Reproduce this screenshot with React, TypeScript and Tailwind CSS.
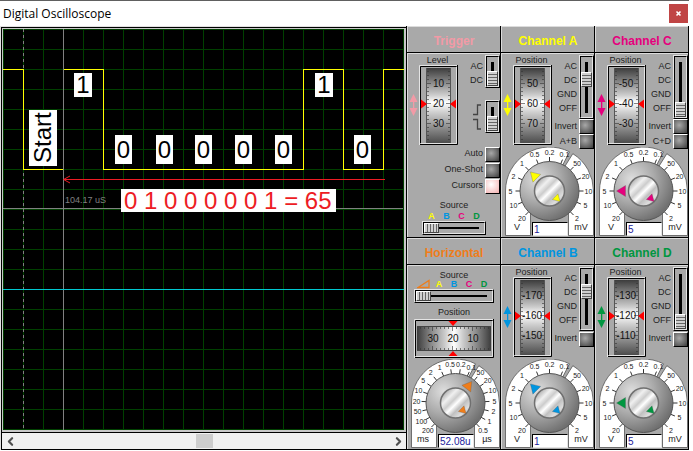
import React, { useState } from 'react';
import { ChevronLeft, ChevronRight } from 'lucide-react';

const SOURCES = [
  { name: 'A', color: 'text-[#ffff00]' },
  { name: 'B', color: 'text-[#0095e0]' },
  { name: 'C', color: 'text-[#e5007d]' },
  { name: 'D', color: 'text-[#009640]' },
];

const VOLT_MARKS = ['20', '10', '5', '2', '1', '0.5', '0.2', '0.1', '50', '20', '10', '5', '2'];
const TIME_MARKS = ['200', '100', '50', '20', '10', '5', '2', '1', '0.5', '0.2', '0.1', '50', '20', '10', '5', '2', '1', '0.5'];

const CX = 47.5;
const CY = 44;

const polar = (r: number, deg: number): [number, number] => {
  const a = (deg * Math.PI) / 180;
  return [CX + r * Math.cos(a), CY - r * Math.sin(a)];
};

const pointer = (tip: number, base: number, half: number, deg: number) => {
  const spread = (Math.atan2(half, base) * 180) / Math.PI;
  const r = Math.hypot(base, half);
  return [polar(tip, deg), polar(r, deg - spread), polar(r, deg + spread)]
    .map((p) => p.join(','))
    .join(' ');
};

// Shared gradients for the knobs and the thumb wheels
const Gradients: React.FC = () => (
  <svg className="absolute h-0 w-0" aria-hidden="true">
    <defs>
      <radialGradient id="knob" cx="30%" cy="30%" r="75%">
        <stop offset="0" stopColor="#dedede" />
        <stop offset="0.5" stopColor="#ababab" />
        <stop offset="1" stopColor="#707070" />
      </radialGradient>
      <linearGradient id="cap" x1="0" y1="0" x2="1" y2="1">
        <stop offset="0.1" stopColor="#a0a0a0" />
        <stop offset="0.3" stopColor="#f0f0f0" />
        <stop offset="0.42" stopColor="#cccccc" />
        <stop offset="0.52" stopColor="#ffffff" />
        <stop offset="0.64" stopColor="#c0c0c0" />
        <stop offset="0.78" stopColor="#dddddd" />
        <stop offset="0.95" stopColor="#a0a0a0" />
      </linearGradient>
      <linearGradient id="wheelV" x1="0" y1="0" x2="0" y2="1">
        <stop offset="0" stopColor="#3c3c3c" />
        <stop offset="0.2" stopColor="#8c8c8c" />
        <stop offset="0.36" stopColor="#cccccc" />
        <stop offset="0.46" stopColor="#ffffff" />
        <stop offset="0.6" stopColor="#cccccc" />
        <stop offset="0.8" stopColor="#8c8c8c" />
        <stop offset="1" stopColor="#4c4c4c" />
      </linearGradient>
      <linearGradient id="wheelH" x1="0" y1="0" x2="1" y2="0">
        <stop offset="0" stopColor="#3c3c3c" />
        <stop offset="0.2" stopColor="#8c8c8c" />
        <stop offset="0.38" stopColor="#cccccc" />
        <stop offset="0.5" stopColor="#ffffff" />
        <stop offset="0.62" stopColor="#cccccc" />
        <stop offset="0.8" stopColor="#8c8c8c" />
        <stop offset="1" stopColor="#3c3c3c" />
      </linearGradient>
    </defs>
  </svg>
);

const Bevel: React.FC<{ children: React.ReactNode }> = ({ children }) => (
  <div className="border border-b-black border-l-[#e4e4e4] border-r-black border-t-[#e4e4e4]">
    <div className="flex border border-b-[#e4e4e4] border-l-black border-r-[#e4e4e4] border-t-black">{children}</div>
  </div>
);

interface SwitchProps {
  label: string;
  max: number;
  initial: number;
}

const VerticalSwitch: React.FC<SwitchProps> = ({ label, max, initial }) => {
  const [value, setValue] = useState(initial);
  return (
    <Bevel>
      <input
        type="range"
        aria-label={label}
        min={0}
        max={max}
        value={value}
        onChange={(e) => setValue(Number(e.target.value))}
        className={`${max === 1 ? 'h-[29px]' : 'h-[60px]'} w-[11px] appearance-none bg-[linear-gradient(#000,#000)] bg-[length:3px_calc(100%-9px)] bg-center bg-no-repeat [writing-mode:vertical-lr] [&::-webkit-slider-thumb]:h-[15px] [&::-webkit-slider-thumb]:w-[11px] [&::-webkit-slider-thumb]:appearance-none [&::-webkit-slider-thumb]:border [&::-webkit-slider-thumb]:border-b-[#444] [&::-webkit-slider-thumb]:border-l-white [&::-webkit-slider-thumb]:border-r-[#444] [&::-webkit-slider-thumb]:border-t-white [&::-webkit-slider-thumb]:bg-[repeating-linear-gradient(#d0d0d0_0px,#d0d0d0_2px,#666_2px,#666_3px)]`}
      />
    </Bevel>
  );
};

const SourceSlider: React.FC<{ label: string; max: number; size: string }> = ({ label, max, size }) => {
  const [value, setValue] = useState(0);
  return (
    <div className={`mx-auto ${size}`}>
      <Bevel>
        <input
          type="range"
          aria-label={label}
          min={0}
          max={max}
          value={value}
          onChange={(e) => setValue(Number(e.target.value))}
          className="h-[10px] w-full appearance-none bg-[linear-gradient(#000,#000)] bg-[length:calc(100%-10px)_2px] bg-center bg-no-repeat [&::-webkit-slider-thumb]:h-[10px] [&::-webkit-slider-thumb]:w-[15px] [&::-webkit-slider-thumb]:appearance-none [&::-webkit-slider-thumb]:border [&::-webkit-slider-thumb]:border-b-[#444] [&::-webkit-slider-thumb]:border-l-white [&::-webkit-slider-thumb]:border-r-[#444] [&::-webkit-slider-thumb]:border-t-white [&::-webkit-slider-thumb]:bg-[repeating-linear-gradient(90deg,#d0d0d0_0px,#d0d0d0_2px,#666_2px,#666_3px)]"
        />
      </Bevel>
    </div>
  );
};

const PushButton: React.FC<{ label: string; lit?: boolean }> = ({ label, lit }) => (
  <label className="flex h-4 items-center justify-end gap-[2px] whitespace-nowrap">
    {label}
    <input
      type="checkbox"
      defaultChecked={lit}
      className="h-[15px] w-[15px] shrink-0 appearance-none border border-b-black border-l-white border-r-black border-t-white bg-[radial-gradient(circle_at_40%_40%,#a8a8a8,#3c3c3c)] checked:bg-[radial-gradient(circle_at_40%_35%,#fff,#f4b0b0)]"
    />
  </label>
);

const RangeArrow: React.FC<{ color: string }> = ({ color }) => (
  <svg width="9" height="24" viewBox="0 0 9 24" className={`shrink-0 ${color}`} fill="currentColor">
    <path d="M4.5 1 8.5 9H.5ZM4.5 23 .5 15h8ZM4 8h1.3v8H4Z" />
  </svg>
);

const VerticalWheel: React.FC<{ label: string; values: string[] }> = ({ label, values }) => (
  <svg width="39" height="80" viewBox="0 0 39 80" role="slider" aria-label={label} aria-valuenow={Number(values[1])}>
    <path d="M.5 80V.5H39" fill="none" stroke="#e4e4e4" />
    <path d="M1.5 78V1.5H37.5" fill="none" stroke="#000" />
    <path d="M2 78.5H37.5V2" fill="none" stroke="#e4e4e4" />
    <path d="M1 79.5H38.5V0" fill="none" stroke="#000" />
    <rect x="7" y="3" width="25" height="75" fill="url(#wheelV)" />
    <path d="M7.5 3V78M31.5 3V78" stroke="#555" />
    {Array.from({ length: 18 }, (_, i) => {
      const y = 6.5 + i * 4;
      const long = i === 3 || i === 8 || i === 13;
      return <path key={i} d={`M8 ${y}h${long ? 4 : 2}M31 ${y}h-${long ? 4 : 2}`} stroke="#333" strokeWidth="0.6" />;
    })}
    {values.map((v, i) => (
      <text key={v} x={v.length > 2 ? 19 : 19.5} y={22 + i * 20} textAnchor="middle" fontSize="10" fill="#111">
        {v}
      </text>
    ))}
    <path d="M2 34.5 8 39 2 43.5ZM37 34.5 31 39l6 4.5Z" fill="#f00" />
  </svg>
);

const HorizontalWheel: React.FC = () => (
  <svg width="80" height="39" viewBox="0 0 80 39" role="slider" aria-label="Horizontal position" aria-valuenow={20} className="mx-auto block">
    <path d="M.5 39V.5H80" fill="none" stroke="#e4e4e4" />
    <path d="M1.5 37V1.5H78.5" fill="none" stroke="#000" />
    <path d="M2 37.5H78.5V2" fill="none" stroke="#e4e4e4" />
    <path d="M1 38.5H79.5V0" fill="none" stroke="#000" />
    <rect x="3" y="7" width="74" height="25" fill="url(#wheelH)" />
    <path d="M3 7.5H77M3 31.5H77" stroke="#444" />
    {Array.from({ length: 18 }, (_, i) => {
      const x = 6.5 + i * 4;
      const long = i === 3 || i === 8 || i === 13;
      return <path key={i} d={`M${x} 8v${long ? 4 : 2}M${x} 31v-${long ? 4 : 2}`} stroke="#333" strokeWidth="0.6" />;
    })}
    {['30', '20', '10'].map((v, i) => (
      <text key={v} x={19 + i * 20} y="23" textAnchor="middle" fontSize="10" fill="#111">
        {v}
      </text>
    ))}
    <path d="M34.5 2h9L39 7ZM34.5 37h9L39 32Z" fill="#f00" />
  </svg>
);

interface DialProps {
  label: string;
  marks: string[];
  units: [string, string];
  value: string;
  angle: number;
  color: string;
}

const Dial: React.FC<DialProps> = ({ label, marks, units, value, angle, color }) => {
  const step = 270 / (marks.length - 1);
  const [lx, ly] = polar(44, 63);
  const [rx, ry] = polar(44, 58);
  return (
    <div className="relative">
      <svg width="93" height="89" viewBox="0 0 93 89" role="img" aria-label={`${label} dial`} className="block">
        <g fill="#fff" stroke="#555" strokeWidth="0.8">
          <path d={`M3.5 88.5V44A44 44 0 0 1 ${lx} ${ly}L${CX} ${CY}L28.5 44V88.5Z`} />
          <path d={`M91.5 88.5V44A44 44 0 0 0 ${rx} ${ry}L${CX} ${CY}L66.5 44V88.5Z`} />
        </g>
        {marks.map((m, i) => {
          const deg = 225 - i * step;
          const [x1, y1] = polar(29, deg);
          const [x2, y2] = polar(34, deg);
          const [tx, ty] = polar(39, deg);
          return (
            <g key={i}>
              <path d={`M${x1} ${y1}L${x2} ${y2}`} stroke="#333" />
              <text x={tx} y={ty + 2.5} textAnchor="middle" fontSize="7" fill="#222">
                {m}
              </text>
            </g>
          );
        })}
        <circle cx={CX} cy={CY} r="29.5" fill="url(#knob)" stroke="#555" />
        <circle cx={CX} cy={CY} r="15" fill="url(#cap)" stroke="#707070" strokeWidth="1.5" />
        <g className={color} fill="currentColor" stroke="#555" strokeWidth="0.3">
          <polygon points={pointer(27, 18, 5.5, angle)} />
          <polygon points={pointer(15, 8, 4, -45)} />
        </g>
        <text x="15" y="83" textAnchor="middle" fontSize="9" fill="#222">
          {units[0]}
        </text>
        <text x="79" y="83" textAnchor="middle" fontSize="9" fill="#222">
          {units[1]}
        </text>
      </svg>
      <input
        type="text"
        aria-label={label}
        defaultValue={value}
        className="absolute bottom-0 left-[30px] h-[14px] w-9 border border-b-[#e4e4e4] border-l-black border-r-[#e4e4e4] border-t-black bg-white pl-px text-[10px] leading-3 text-[#1c1c9c]"
      />
    </div>
  );
};

interface PanelProps {
  title: string;
  color: string;
  children: React.ReactNode;
}

const Panel: React.FC<PanelProps> = ({ title, color, children }) => (
  <section className="flex flex-col border-b border-l border-black">
    <h2 className={`h-[26px] border-l border-t border-[#dcdcdc] pt-[6px] text-center text-[12px] font-bold leading-4 ${color}`}>{title}</h2>
    <div className="h-[185px] border-t border-black">
      <div className="h-full border-l border-t border-[#dcdcdc]">{children}</div>
    </div>
  </section>
);

const Positioner: React.FC<{ label: string; name: string; color: string; values: string[] }> = ({ label, name, color, values }) => (
  <div className="w-[51px] shrink-0">
    <div className="h-[11px] pl-2 text-center leading-3">{label}</div>
    <div className="flex items-center gap-px pl-px">
      <RangeArrow color={color} />
      <VerticalWheel label={name} values={values} />
    </div>
  </div>
);

interface ChannelProps {
  name: string;
  color: string;
  values: string[];
  coupling: number;
  scale: string;
  angle: number;
  sum?: string;
}

const ChannelPanel: React.FC<ChannelProps> = ({ name, color, values, coupling, scale, angle, sum }) => (
  <Panel title={`Channel ${name}`} color={color}>
    <div className="flex h-[93px]">
      <Positioner label="Position" name={`Channel ${name} position`} color={color} values={values} />
      <div className="flex flex-1 flex-col items-end pt-px">
        <div className="flex gap-[2px]">
          <ul className="pt-1 text-right leading-[14px]">
            <li>AC</li>
            <li>DC</li>
            <li>GND</li>
            <li>OFF</li>
          </ul>
          <VerticalSwitch label={`Channel ${name} coupling`} max={3} initial={coupling} />
        </div>
        <PushButton label="Invert" />
        {sum && <PushButton label={sum} />}
      </div>
    </div>
    <Dial label={`Channel ${name} scale`} marks={VOLT_MARKS} units={['V', 'mV']} value={scale} angle={angle} color={color} />
  </Panel>
);

const SourceLetters: React.FC<{ ramp?: boolean }> = ({ ramp }) => (
  <div className="flex h-[10px] justify-center text-[9px] font-bold leading-[10px]">
    {ramp && (
      <svg width="15" height="10" viewBox="0 0 15 10" fill="none" stroke="#ef7d1a" strokeWidth="1.3">
        <path d="M1 8.5 12 1.5V8.5Z" />
      </svg>
    )}
    {SOURCES.map((s) => (
      <span key={s.name} className={`w-[15px] text-center ${s.color}`}>
        {s.name}
      </span>
    ))}
  </div>
);

const TriggerPanel: React.FC = () => (
  <Panel title="Trigger" color="text-[#f29aa6]">
    <div className="flex h-[92px]">
      <Positioner label="Level" name="Trigger level" color="text-[#f29aa6]" values={['10', '20', '30']} />
      <div className="flex flex-1 flex-col items-end gap-3 pt-px">
        <div className="flex gap-[2px]">
          <ul className="pt-1 text-right leading-[14px]">
            <li>AC</li>
            <li>DC</li>
          </ul>
          <VerticalSwitch label="Trigger coupling" max={1} initial={1} />
        </div>
        <div className="flex gap-[3px]">
          <svg width="9" height="33" viewBox="0 0 9 33" fill="none" stroke="#444" strokeWidth="1.3">
            <path d="M0 14.5H4.5V5H8M0 19.5H4.5V29H8" />
          </svg>
          <VerticalSwitch label="Trigger edge" max={1} initial={1} />
        </div>
      </div>
    </div>
    <PushButton label="Auto" />
    <PushButton label="One-Shot" />
    <PushButton label="Cursors" lit />
    <div className="h-[17px] pt-1 text-center leading-[14px]">Source</div>
    <SourceLetters />
    <SourceSlider label="Trigger source" max={3} size="w-16" />
  </Panel>
);

const HorizontalPanel: React.FC = () => (
  <Panel title="Horizontal" color="text-[#ef7d1a]">
    <div className="h-[13px] pt-px text-center leading-4">Source</div>
    <SourceLetters ramp />
    <SourceSlider label="Horizontal source" max={4} size="w-20" />
    <div className="h-4 pt-px text-center leading-4">Position</div>
    <div className="h-10">
      <HorizontalWheel />
    </div>
    <Dial label="Time base" marks={TIME_MARKS} units={['ms', 'µs']} value="52.08u" angle={53} color="text-[#ef7d1a]" />
  </Panel>
);

const BITS = [
  { bit: '1', place: 'left-[71px] top-[44px] h-6 w-[18px]' },
  { bit: '0', place: 'left-[112px] top-[106px] h-[29px] w-[17px]' },
  { bit: '0', place: 'left-[153px] top-[106px] h-[29px] w-[17px]' },
  { bit: '0', place: 'left-[192px] top-[106px] h-[29px] w-[17px]' },
  { bit: '0', place: 'left-[232px] top-[106px] h-[29px] w-[17px]' },
  { bit: '0', place: 'left-[272px] top-[106px] h-[29px] w-[17px]' },
  { bit: '1', place: 'left-[312px] top-[44px] h-6 w-[18px]' },
  { bit: '0', place: 'left-[351px] top-[106px] h-[29px] w-[17px]' },
];

const Scope: React.FC = () => (
  <div className="flex min-w-0 flex-1 flex-col border-l border-t border-[#e0e0e0]">
    <div className="flex flex-1 border-l border-t border-black">
      <div className="relative flex-1 overflow-hidden border border-b-2 border-r-2 border-[#c8c8c8] bg-black">
        <svg className="absolute inset-0 h-full w-full" shapeRendering="crispEdges" fill="none">
          <defs>
            <pattern id="grid" width="20" height="20" patternUnits="userSpaceOnUse">
              <path d="M0 .5H20M.5 0V20" stroke="#004000" />
            </pattern>
          </defs>
          <rect width="100%" height="100%" fill="url(#grid)" />
          <path d="M0 179.5H400" stroke="#808080" />
          <path d="M20.5 0V2000" stroke="#808080" strokeDasharray="3 3" />
          <path d="M0 40.5H20.5V140.5H60.5V40.5H100.5V140.5H300.5V40.5H340.5V140.5H380.5V40.5H2000" stroke="#ffff00" />
          <path d="M60.5 0V2000" stroke="#808080" />
          <path d="M0 260.5H2000" stroke="#00c8d0" />
          <path d="M61 150.5H382" stroke="#ed1c24" />
          <path d="M67 147 60.5 150.5 67 154" stroke="#ed1c24" shapeRendering="auto" />
        </svg>
        {/* Decoded frame annotations */}
        <span className="absolute left-[62px] top-[165px] text-[9px] leading-3 text-[#808080]">104.17 uS</span>
        <span className="absolute left-[26px] top-[81px] flex h-14 w-7 rotate-180 items-center justify-center bg-white text-[24px] leading-7 text-black [writing-mode:vertical-rl]">
          Start
        </span>
        {BITS.map((b, i) => (
          <span key={i} className={`absolute flex items-center justify-center bg-white text-[24px] text-black ${b.place}`}>
            {b.bit}
          </span>
        ))}
        <span className="absolute left-[118px] top-[160px] h-[23px] w-[215px] whitespace-nowrap bg-white pl-[3px] text-[24px] leading-6 text-[#ed1c24]">
          0 1 0 0 0 0 0 1 = 65
        </span>
      </div>
    </div>
    <div className="flex h-[18px] items-center justify-between border-y border-l border-black bg-[#f0f0f0]">
      <button type="button" aria-label="Scroll left" className="flex h-4 w-4 items-center justify-center text-[#505050]">
        <ChevronLeft size={13} strokeWidth={4} />
      </button>
      <div className="h-[14px] w-[17px] bg-[#cdcdcd]" />
      <button type="button" aria-label="Scroll right" className="flex h-4 w-4 items-center justify-center text-[#505050]">
        <ChevronRight size={13} strokeWidth={4} />
      </button>
    </div>
  </div>
);

export default function App() {
  return (
    <div className="bg-white pr-1 font-['Liberation_Sans',Arial,sans-serif]">
      <Gradients />
      <header className="flex h-[26px] items-center justify-between border-t border-[#606060] pl-[3px] pr-px">
        <h1 className="font-['Open_Sans','Noto_Sans',sans-serif] text-[12px] text-black">Digital Oscilloscope</h1>
        <button type="button" aria-label="Close" className="flex h-[19px] w-[19px] items-center justify-center bg-[#c04545] text-white">
          <svg width="7" height="7" viewBox="0 0 7 7" stroke="currentColor" strokeWidth="1.6">
            <path d="M1.500 1.500 5.500 5.500M5.500 1.500 1.500 5.500" />
          </svg>
        </button>
      </header>
      <main className="flex">
        <Scope />
        <div className="grid shrink-0 grid-cols-[repeat(3,94px)] border-r border-black bg-[#a9a9a9] text-[9px] text-[#222]">
          <TriggerPanel />
          <ChannelPanel name="A" color="text-[#ffff00]" values={['50', '60', '70']} coupling={1} scale="1" angle={135} sum="A+B" />
          <ChannelPanel name="C" color="text-[#e5007d]" values={['-50', '-40', '-30']} coupling={3} scale="5" angle={180} sum="C+D" />
          <HorizontalPanel />
          <ChannelPanel name="B" color="text-[#0095e0]" values={['-170', '-160', '-150']} coupling={1} scale="1" angle={135} />
          <ChannelPanel name="D" color="text-[#009640]" values={['-130', '-120', '-110']} coupling={3} scale="5" angle={180} />
        </div>
      </main>
    </div>
  );
}
